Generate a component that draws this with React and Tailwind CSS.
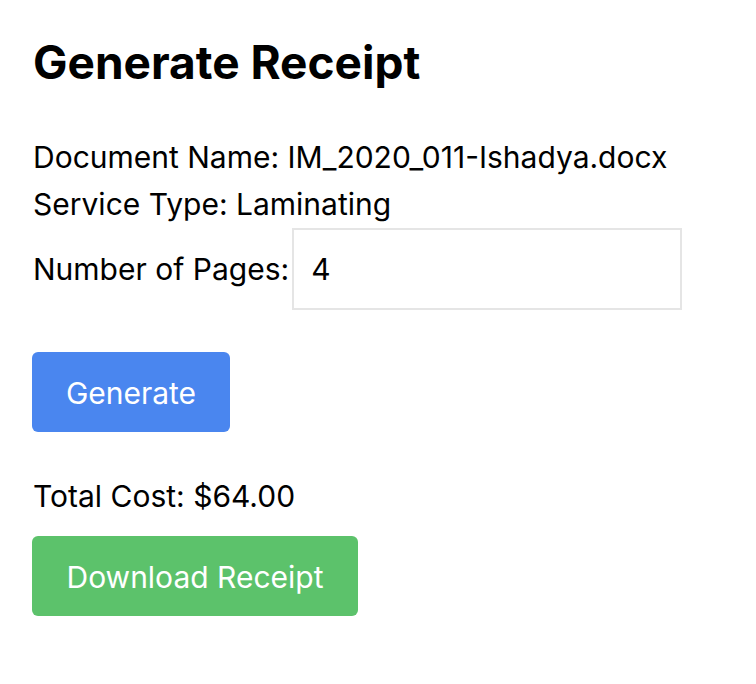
export default function App() {
  return (
    <div className="min-h-screen bg-white px-[33px] pt-[38px] text-black font-['Inter',sans-serif]">
      <h2 className="text-[46px] leading-[48px] font-bold">Generate Receipt</h2>

      <div className="mt-[48px] text-[30px]">
        <div className="leading-[47px]">Document Name: IM_2020_011-Ishadya.docx</div>
        <div className="leading-[47px]">Service Type: Laminating</div>
        <div className="flex items-center">
          <label className="leading-[42px]">Number of Pages:</label>
          <input
            type="number"
            defaultValue="4"
            className="ml-[3px] h-[82px] w-[390px] border-2 border-[#e5e5e5] px-[17px] text-[30px] outline-none"
          />
        </div>
      </div>

      <button className="-ml-px mt-[42px] h-[80px] w-[198px] rounded-md bg-[#4a86ef] pt-[3px] text-[30px] text-white">
        Generate
      </button>

      <div className="mt-[43px] text-[30px] leading-[42px]">Total Cost: $64.00</div>

      <button className="-ml-px mt-[19px] h-[80px] w-[326px] rounded-md bg-[#5cc26b] pt-[3px] text-[30px] text-white">
        Download Receipt
      </button>
    </div>
  )
}
